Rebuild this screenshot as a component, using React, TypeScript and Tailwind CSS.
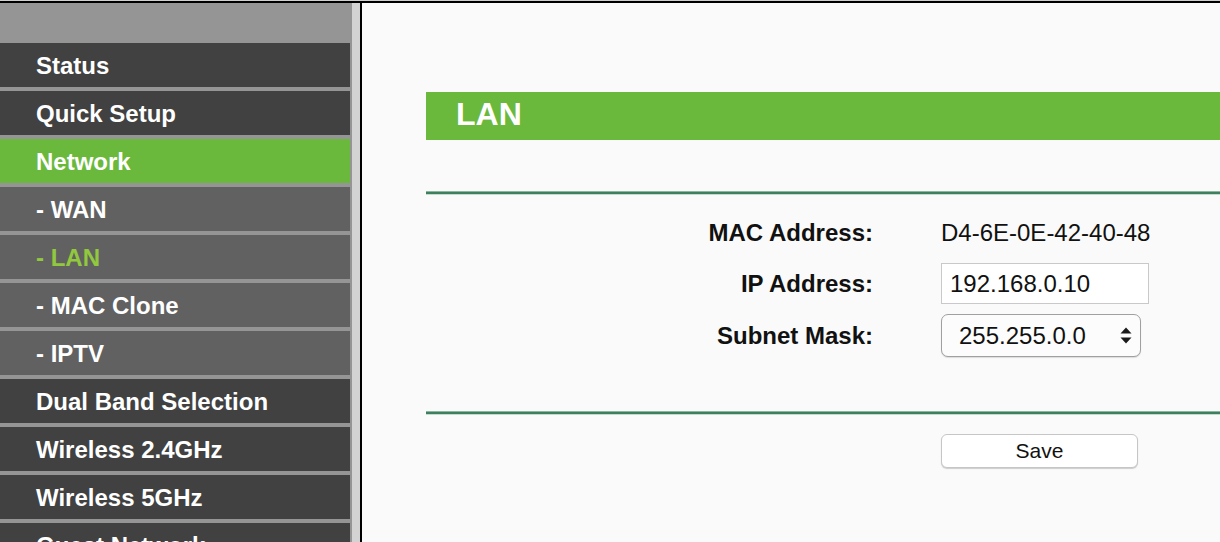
import React from "react";

type Kind = "main" | "active" | "sub" | "subActive";

const items: { label: string; kind: Kind }[] = [
  { label: "Status", kind: "main" },
  { label: "Quick Setup", kind: "main" },
  { label: "Network", kind: "active" },
  { label: "- WAN", kind: "sub" },
  { label: "- LAN", kind: "subActive" },
  { label: "- MAC Clone", kind: "sub" },
  { label: "- IPTV", kind: "sub" },
  { label: "Dual Band Selection", kind: "main" },
  { label: "Wireless 2.4GHz", kind: "main" },
  { label: "Wireless 5GHz", kind: "main" },
  { label: "Guest Network", kind: "main" },
];

const kindClass: Record<Kind, string> = {
  main: "bg-[#414141] text-white",
  active: "bg-[#6ab93c] text-white",
  sub: "bg-[#616161] text-white",
  subActive: "bg-[#616161] text-[#92c83e]",
};

function Rule() {
  return (
    <div className="h-[4px] bg-[#3e805e] border-t border-t-[#8ab59f] border-b border-b-[#c3dbce]" />
  );
}

export default function App() {
  return (
    <div
      className="w-[1220px] h-[542px] overflow-hidden flex flex-col bg-[#fafafa]"
      style={{ fontFamily: '"Liberation Sans", Arial, sans-serif' }}
    >
      <div className="h-[1px] bg-[#cfcfcf] shrink-0" />
      <div className="h-[2px] bg-black shrink-0" />
      <div className="flex flex-1 min-h-0">
        <aside className="w-[352px] shrink-0 bg-[#959595] pt-[40px] flex flex-col gap-[4px]">
          {items.map((it) => (
            <div
              key={it.label}
              className={`w-[350px] h-[44px] shrink-0 flex items-center pl-[36px] pt-[1px] text-[24px] font-bold leading-none ${kindClass[it.kind]}`}
            >
              {it.label}
            </div>
          ))}
        </aside>
        <div className="w-[8px] shrink-0 bg-[#d3d3d3]" />
        <div className="w-[2px] shrink-0 bg-black" />
        <main className="flex-1 min-w-0 pl-[64px] pt-[89px] flex flex-col">
          <div className="h-[48px] bg-[#6ab93c] flex items-center pl-[30px] pb-[4px] text-[32px] font-bold text-white leading-none">
            LAN
          </div>
          <div className="mt-[51px]">
            <Rule />
          </div>
          <div className="mt-[17px] grid grid-cols-[447px_auto] gap-x-[68px] gap-y-[10px] text-[24px] text-[#111]">
            <div className="h-[41px] flex items-center justify-end font-bold">MAC Address:</div>
            <div className="h-[41px] flex items-center">D4-6E-0E-42-40-48</div>

            <div className="h-[41px] flex items-center justify-end font-bold">IP Address:</div>
            <div className="h-[41px] w-[208px] flex items-center pl-[8px] bg-white border border-[#c9c9c9]">
              192.168.0.10
            </div>

            <div className="h-[43px] flex items-center justify-end font-bold">Subnet Mask:</div>
            <div className="h-[43px] w-[200px] flex items-center justify-between pl-[17px] pr-[8px] bg-[#fcfcfc] border border-[#a0a0a0] rounded-[7px] shadow-[0_1px_1px_rgba(0,0,0,0.12)]">
              <span>255.255.0.0</span>
              <svg width="12" height="17" viewBox="0 0 12 17" className="shrink-0">
                <polygon points="0.5,6.5 6,0.5 11.5,6.5" fill="#1a1a1a" />
                <polygon points="0.5,10.5 6,16.5 11.5,10.5" fill="#1a1a1a" />
              </svg>
            </div>
          </div>
          <div className="mt-[54px]">
            <Rule />
          </div>
          <div className="mt-[19px] ml-[515px] w-[197px] h-[34px] flex items-center justify-center bg-white border border-[#c6c6c6] rounded-[6px] shadow-[0_1px_1px_rgba(0,0,0,0.18)] text-[21px] text-[#111]">
            Save
          </div>
        </main>
      </div>
    </div>
  );
}
